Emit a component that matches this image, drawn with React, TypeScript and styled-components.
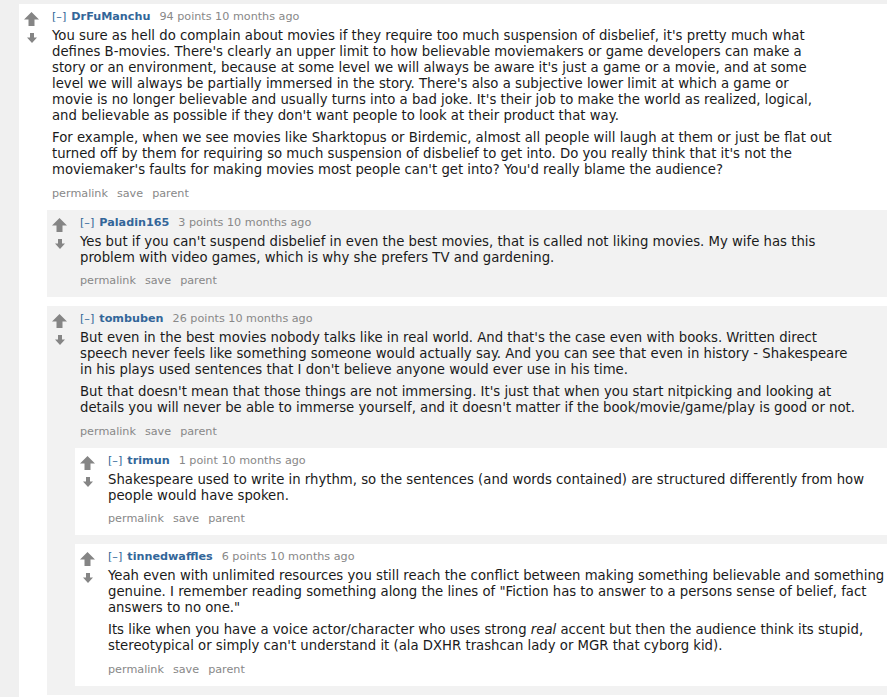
import React from 'react';
import styled, { createGlobalStyle } from 'styled-components';

// each paragraph is kept as the lines the original page wrapped it into
interface CommentData {
  author: string;
  points: string;
  age: string;
  paragraphs: React.ReactNode[][];
  children?: CommentData[];
}

const thread: CommentData = {
  author: 'DrFuManchu',
  points: '94 points',
  age: '10 months ago',
  paragraphs: [
    [
      "You sure as hell do complain about movies if they require too much suspension of disbelief, it's pretty much what",
      "defines B-movies. There's clearly an upper limit to how believable moviemakers or game developers can make a",
      "story or an environment, because at some level we will always be aware it's just a game or a movie, and at some",
      "level we will always be partially immersed in the story. There's also a subjective lower limit at which a game or",
      "movie is no longer believable and usually turns into a bad joke. It's their job to make the world as realized, logical,",
      "and believable as possible if they don't want people to look at their product that way.",
    ],
    [
      'For example, when we see movies like Sharktopus or Birdemic, almost all people will laugh at them or just be flat out',
      "turned off by them for requiring so much suspension of disbelief to get into. Do you really think that it's not the",
      "moviemaker's faults for making movies most people can't get into? You'd really blame the audience?",
    ],
  ],
  children: [
    {
      author: 'Paladin165',
      points: '3 points',
      age: '10 months ago',
      paragraphs: [
        [
          "Yes but if you can't suspend disbelief in even the best movies, that is called not liking movies. My wife has this",
          'problem with video games, which is why she prefers TV and gardening.',
        ],
      ],
    },
    {
      author: 'tombuben',
      points: '26 points',
      age: '10 months ago',
      paragraphs: [
        [
          "But even in the best movies nobody talks like in real world. And that's the case even with books. Written direct",
          'speech never feels like something someone would actually say. And you can see that even in history - Shakespeare',
          "in his plays used sentences that I don't believe anyone would ever use in his time.",
        ],
        [
          "But that doesn't mean that those things are not immersing. It's just that when you start nitpicking and looking at",
          "details you will never be able to immerse yourself, and it doesn't matter if the book/movie/game/play is good or not.",
        ],
      ],
      children: [
        {
          author: 'trimun',
          points: '1 point',
          age: '10 months ago',
          paragraphs: [
            [
              'Shakespeare used to write in rhythm, so the sentences (and words contained) are structured differently from how',
              'people would have spoken.',
            ],
          ],
        },
        {
          author: 'tinnedwaffles',
          points: '6 points',
          age: '10 months ago',
          paragraphs: [
            [
              'Yeah even with unlimited resources you still reach the conflict between making something believable and something',
              'genuine. I remember reading something along the lines of "Fiction has to answer to a persons sense of belief, fact',
              'answers to no one."',
            ],
            [
              <>
                Its like when you have a voice actor/character who uses strong <em>real</em> accent but then the audience think
                its stupid,
              </>,
              "stereotypical or simply can't understand it (ala DXHR trashcan lady or MGR that cyborg kid).",
            ],
          ],
        },
      ],
    },
  ],
};

function UpArrow() {
  return (
    <UpIcon viewBox="0 0 15 14" width="15" height="14">
      <path d="M7.5 0 L15 7.5 L10.5 7.5 L10.5 14 L4.5 14 L4.5 7.5 L0 7.5 Z" fill="#858585" />
    </UpIcon>
  );
}

function DownArrow() {
  return (
    <DownIcon viewBox="0 0 10 10" width="10" height="10">
      <path d="M3 0 L7 0 L7 4.5 L10 4.5 L5 10 L0 4.5 L3 4.5 Z" fill="#858585" />
    </DownIcon>
  );
}

function Comment({ data, depth }: { data: CommentData; depth: number }) {
  return (
    <Box $shaded={depth % 2 === 1} $root={depth === 0}>
      <Arrows>
        <UpArrow />
        <DownArrow />
      </Arrows>
      <Entry>
        <Tagline>
          <Expand>[–]</Expand>
          <Author>{data.author}</Author>
          <Meta>
            {data.points} {data.age}
          </Meta>
        </Tagline>
        <Body>
          {data.paragraphs.map((lines, i) => (
            <Para key={i}>
              {lines.map((line, j) => (
                <Line key={j}>{line}</Line>
              ))}
            </Para>
          ))}
        </Body>
        <Buttons>
          <Button>permalink</Button>
          <Button>save</Button>
          <Button>parent</Button>
        </Buttons>
        {data.children && (
          <Children>
            {data.children.map((c) => (
              <Comment key={c.author} data={c} depth={depth + 1} />
            ))}
          </Children>
        )}
      </Entry>
    </Box>
  );
}

export default function App() {
  return (
    <>
      <GlobalStyle />
      <Page>
        <Comment data={thread} depth={0} />
      </Page>
    </>
  );
}

const GlobalStyle = createGlobalStyle`
  html, body {
    margin: 0;
    padding: 0;
    background: #f0f0f0;
    font-family: "DejaVu Sans", Verdana, sans-serif;
    overflow: hidden;
  }
`;

const Page = styled.div`
  display: flex;
  flex-direction: column;
  padding: 4px 0 0 19px;
  height: 697px;
  box-sizing: border-box;
  overflow: hidden;
`;

const Box = styled.div<{ $shaded: boolean; $root: boolean }>`
  display: flex;
  align-items: flex-start;
  background: ${(p) => (p.$shaded ? '#f2f2f2' : '#ffffff')};
  padding: 6px 0 9px 6px;
  flex: ${(p) => (p.$root ? '1' : 'none')};
`;

const Arrows = styled.div`
  width: 22px;
  flex-shrink: 0;
  display: flex;
  flex-direction: column;
  align-items: flex-start;
`;

const UpIcon = styled.svg`
  margin-top: 2px;
  margin-left: -1px;
  display: block;
`;

const DownIcon = styled.svg`
  margin-top: 7px;
  margin-left: 2px;
  display: block;
`;

const Entry = styled.div`
  flex: 1;
  min-width: 0;
`;

const Tagline = styled.div`
  margin-left: 5px;
  font-size: 11.2px;
  line-height: 14px;
  color: #888;
  white-space: nowrap;
`;

const Expand = styled.span`
  color: #369;
  margin-right: 5px;
`;

const Author = styled.span`
  color: #369;
  font-weight: bold;
  margin-right: 9px;
`;

const Meta = styled.span`
  color: #888;
`;

const Body = styled.div`
  margin: 4px 0 0 5px;
  font-size: 13.25px;
  line-height: 16px;
  color: #1a1a1a;
`;

const Para = styled.p`
  margin: 0 0 6px;
`;

const Line = styled.span`
  display: block;
  white-space: nowrap;
`;

const Buttons = styled.div`
  display: flex;
  gap: 9px;
  margin: 8.5px 0 0 5px;
  font-size: 11.2px;
  line-height: 14px;
`;

const Button = styled.span`
  color: #888;
`;

const Children = styled.div`
  display: flex;
  flex-direction: column;
  gap: 9px;
  margin-top: 9px;
`;
